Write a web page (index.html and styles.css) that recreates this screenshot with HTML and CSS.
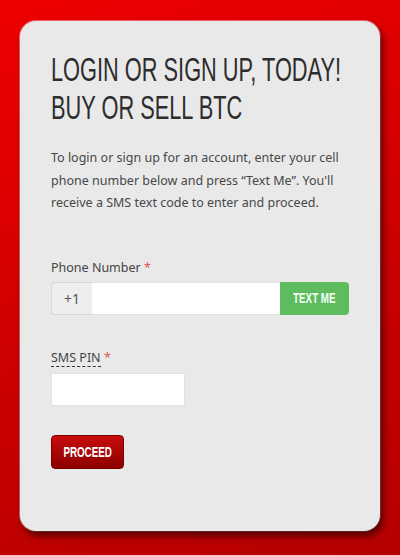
FILE: index.html
```html
<!DOCTYPE html>
<html lang="en">
    <head>
        <meta charset="UTF-8">
        <meta name="viewport" content="width=device-width, initial-scale=1.0">
        <title>Login or Sign Up</title>
        <link rel="stylesheet" href="styles.css">
    </head>
    <body>
        <div class="login-card">
            <h1>Login or sign up, today!<br>Buy or sell BTC</h1>

            <p class="intro">To login or sign up for an account, enter your cell phone number below and press &ldquo;Text Me&rdquo;. You'll receive a SMS text code to enter and proceed.</p>

            <form id="login-form">
                <label class="field-label" for="phone-input">Phone Number <span class="required">*</span></label>
                <div class="input-group">
                    <span class="addon">+1</span>
                    <input type="tel" id="phone-input" autocomplete="off">
                    <button type="button" class="btn-text"><span class="narrow">Text Me</span></button>
                </div>

                <label class="field-label pin-label" for="pin-input"><abbr title="Code sent by text message">SMS PIN</abbr> <span class="required">*</span></label>
                <input type="text" id="pin-input" class="pin-input" autocomplete="off">

                <button type="submit" class="btn-proceed"><span class="narrow">Proceed</span></button>
            </form>
        </div>
    </body>
</html>
```

FILE: styles.css
```css
body, html {
    height: 100%;
    margin: 0;
}
body {
    background: linear-gradient(160deg, #ee0000 0%, #dd0000 30%, #c80000 60%, #b50000 100%);
    font-family: "Noto Sans", Arial, sans-serif;
    overflow: hidden;
}
.login-card {
    box-sizing: border-box;
    width: 360px;
    height: 510px;
    margin: 21px 0 0 20px;
    padding: 30px 31px 0 31px;
    background-color: #e9e9e9;
    border-radius: 16px;
    box-shadow: 3px 5px 7px rgba(50, 0, 0, 0.75), 0 0 0 1px rgba(255, 255, 255, 0.4);
}
h1 {
    margin: 0;
    font-family: "Liberation Sans", Arial, sans-serif;
    font-weight: normal;
    font-size: 33px;
    line-height: 38px;
    text-transform: uppercase;
    white-space: nowrap;
    color: #2d2d2d;
    transform: scaleX(0.66);
    transform-origin: left top;
}
.narrow {
    display: inline-block;
    transform: scaleX(0.7);
}
.intro {
    margin: 20px 0 0 0;
    font-size: 12.5px;
    line-height: 22.5px;
    color: #474747;
}
#login-form {
    margin-top: 44px;
}
.field-label {
    display: block;
    font-size: 12.5px;
    line-height: 17px;
    color: #444;
    margin-bottom: 6px;
}
.required {
    color: #e05555;
}
.input-group {
    display: flex;
    width: 298px;
    height: 33px;
}
.addon {
    box-sizing: border-box;
    width: 41px;
    display: flex;
    align-items: center;
    justify-content: center;
    background-color: #eeeeee;
    border: 1px solid #d6d6d6;
    border-right: none;
    border-radius: 4px 0 0 4px;
    color: #555;
    font-size: 14px;
}
#phone-input {
    flex: 1;
    min-width: 0;
    border: 1px solid #e2e2e2;
    border-left: none;
    border-right: none;
    background: #fff;
    outline: none;
}
.btn-text {
    width: 69px;
    padding: 0;
    border: none;
    border-radius: 0 4px 4px 0;
    background-color: #5dbd5e;
    color: #f4fff4;
    font-family: "Liberation Sans", Arial, sans-serif;
    font-weight: bold;
    font-size: 14px;
    text-transform: uppercase;
    cursor: pointer;
}
.pin-label {
    margin-top: 34px;
    margin-bottom: 7px;
}
abbr {
    text-decoration: none;
    border-bottom: 1px dashed #333;
}
.pin-input {
    display: block;
    box-sizing: border-box;
    width: 134px;
    height: 33px;
    border: 1px solid #e2e2e2;
    background: #fff;
    outline: none;
}
.btn-proceed {
    margin-top: 29px;
    width: 73px;
    height: 34px;
    padding: 0;
    border: 1px solid #7a0000;
    border-radius: 4px;
    background: linear-gradient(#c80c0c, #8c0000);
    color: #fff;
    font-family: "Liberation Sans", Arial, sans-serif;
    font-weight: bold;
    font-size: 14px;
    text-transform: uppercase;
    cursor: pointer;
}
```
